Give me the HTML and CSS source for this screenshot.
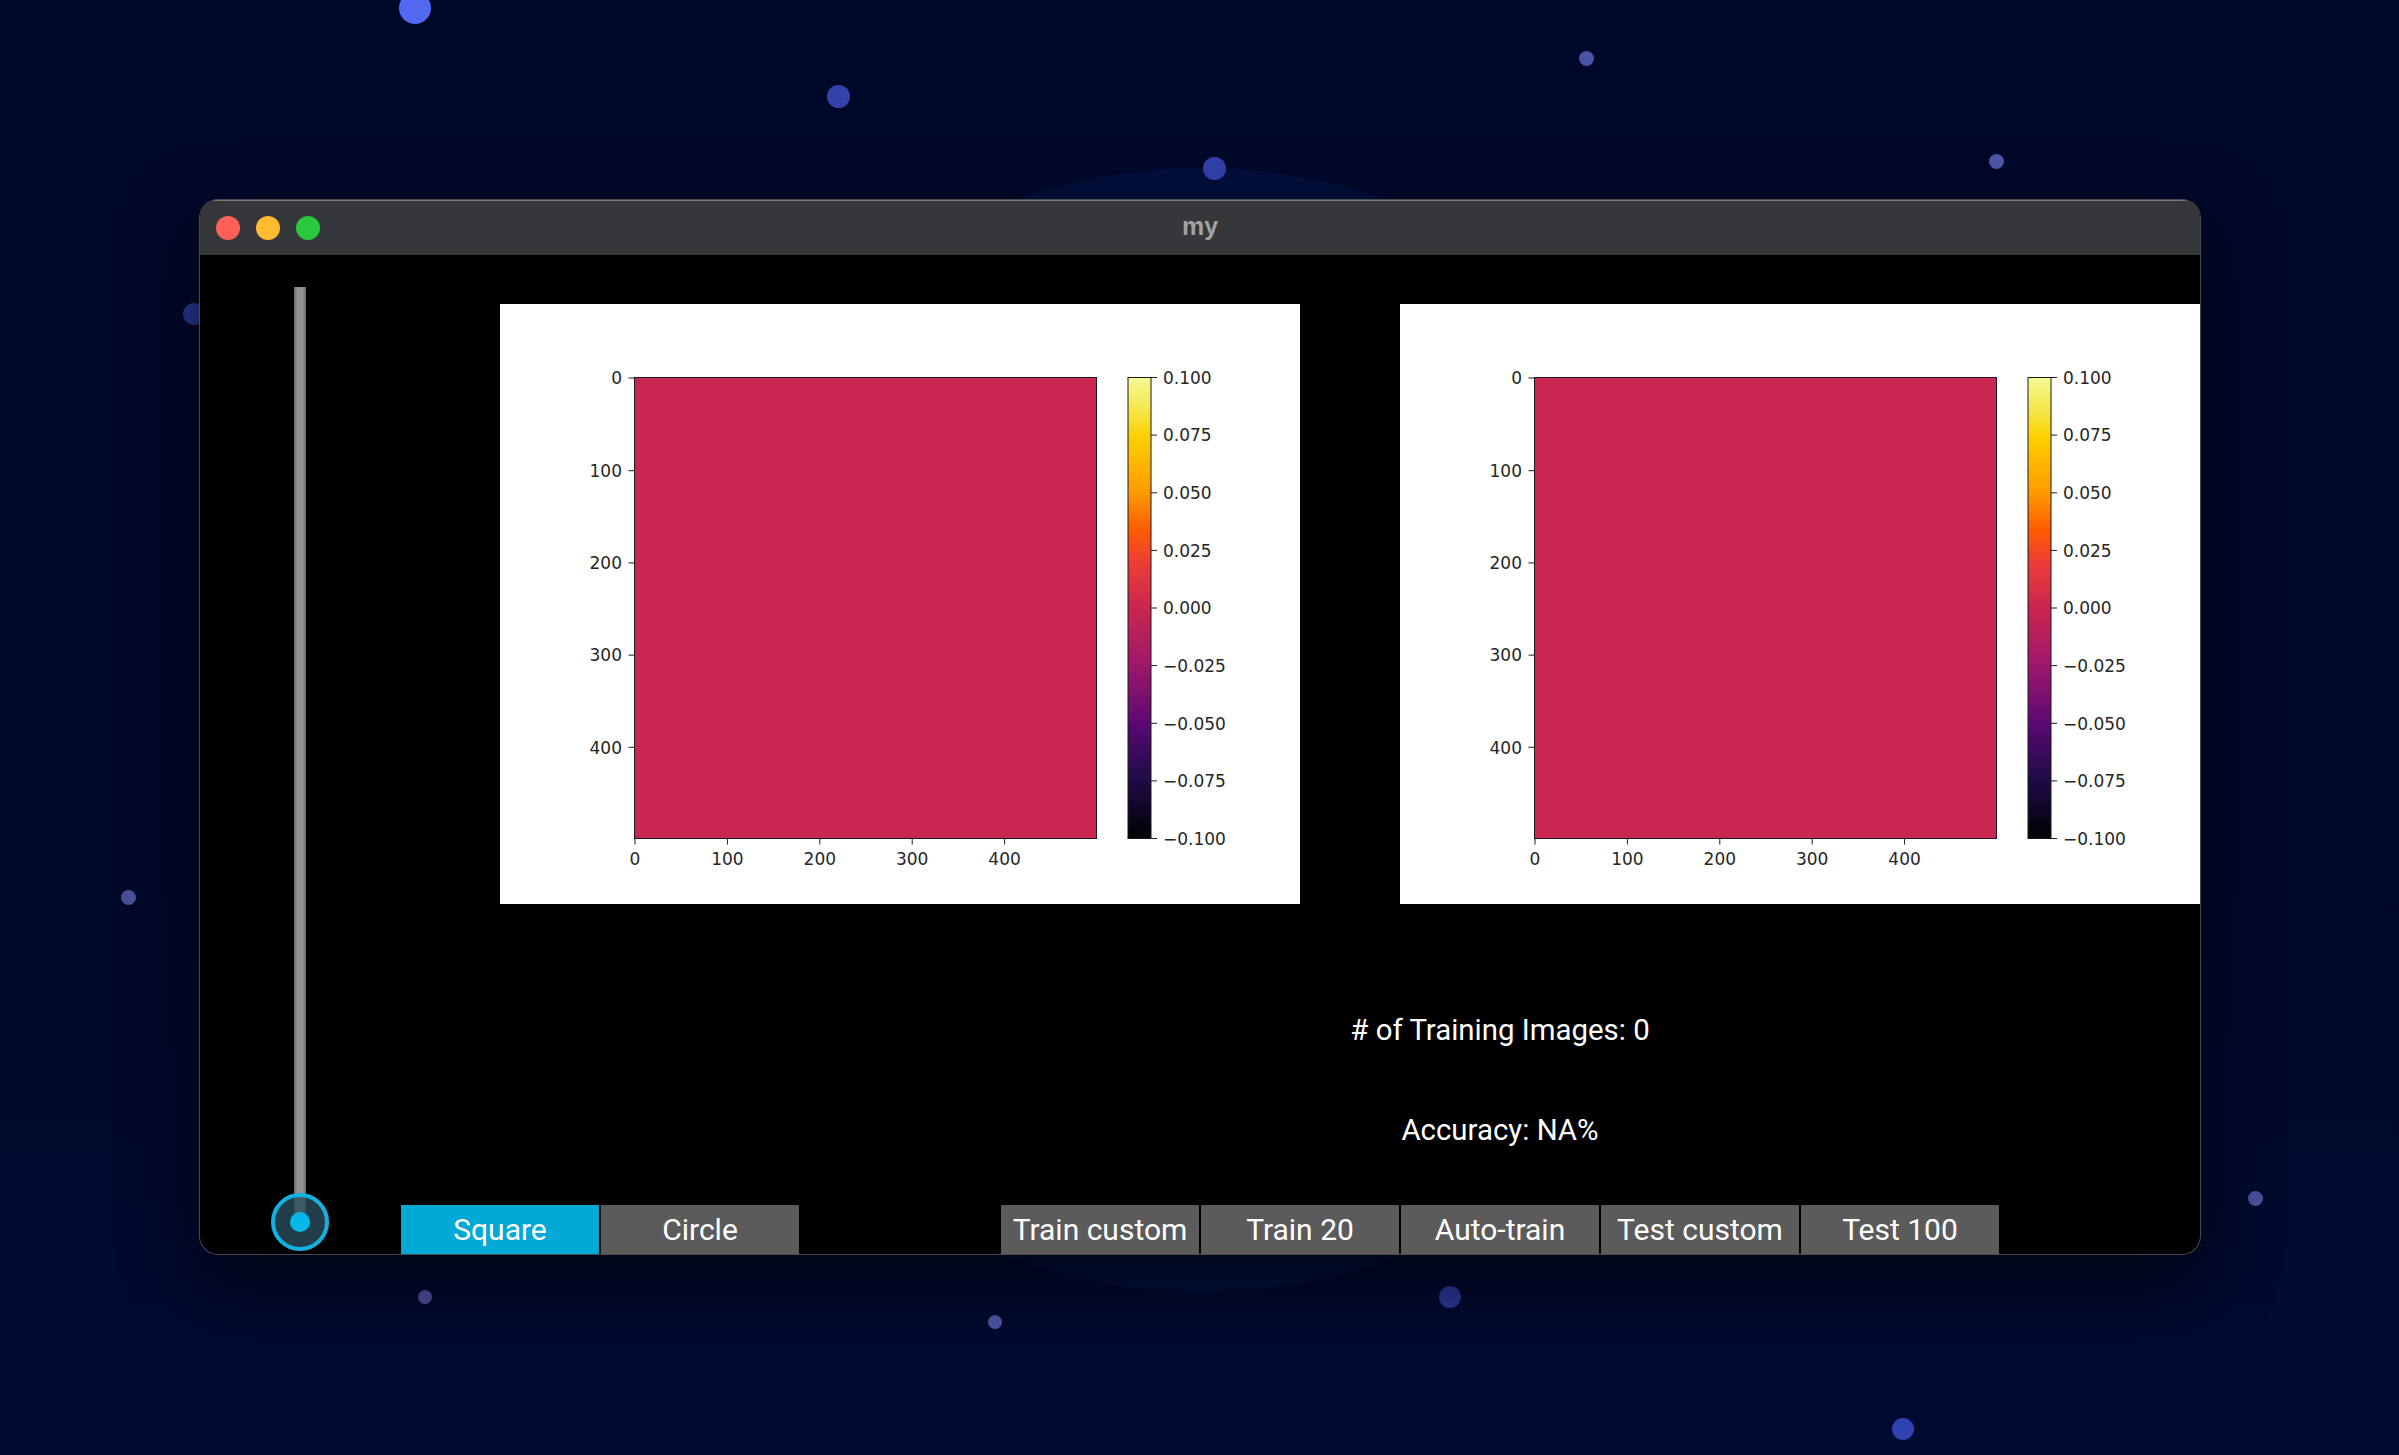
FILE: index.html
```html
<!DOCTYPE html>
<html lang="en">
<head>
<meta charset="utf-8">
<title>my</title>
<link rel="stylesheet" href="styles.css">
</head>
<body>
<div class="desktop">
  <div class="glow"></div>
  <span class="dot d1"></span>
  <span class="dot d2"></span>
  <span class="dot d3"></span>
  <span class="dot d4"></span>
  <span class="dot d5"></span>
  <span class="dot d6"></span>
  <span class="dot d7"></span>
  <span class="dot d8"></span>
  <span class="dot d9"></span>
  <span class="dot d10"></span>
  <span class="dot d11"></span>
  <span class="dot d12"></span>

  <div class="window">
    <div class="titlebar">
      <div class="lights">
        <span class="light red"></span>
        <span class="light yellow"></span>
        <span class="light green"></span>
      </div>
      <div class="title">my</div>
      <div></div>
    </div>
    <div class="content">
      <div class="slider">
        <div class="track"></div>
        <div class="knob"><span class="knob-dot"></span></div>
      </div>
      <div class="main">
        <div class="plots">
          <svg class="figure" viewBox="0 0 800 600" width="800" height="600">
            <defs>
              <linearGradient id="cmapA" x1="0" y1="0" x2="0" y2="1">
                <stop offset="0" stop-color="#f5fa96"/>
                <stop offset="0.07" stop-color="#f6e74c"/>
                <stop offset="0.13" stop-color="#fdd000"/>
                <stop offset="0.25" stop-color="#ff9a00"/>
                <stop offset="0.33" stop-color="#ff5c00"/>
                <stop offset="0.4" stop-color="#ec3e36"/>
                <stop offset="0.5" stop-color="#c9264f"/>
                <stop offset="0.62" stop-color="#a0186b"/>
                <stop offset="0.75" stop-color="#5b0973"/>
                <stop offset="0.87" stop-color="#200b48"/>
                <stop offset="1" stop-color="#000003"/>
              </linearGradient>
            </defs>
            <rect class="fig-bg" width="800" height="600"/>
            <rect class="image" x="134.5" y="73.5" width="462" height="461"/>
            <g class="tick">
              <line x1="128.5" y1="74" x2="134.5" y2="74"/>
              <line x1="128.5" y1="166.7" x2="134.5" y2="166.7"/>
              <line x1="128.5" y1="258.9" x2="134.5" y2="258.9"/>
              <line x1="128.5" y1="351.1" x2="134.5" y2="351.1"/>
              <line x1="128.5" y1="443.3" x2="134.5" y2="443.3"/>
              <line x1="135" y1="534.5" x2="135" y2="540.5"/>
              <line x1="227.4" y1="534.5" x2="227.4" y2="540.5"/>
              <line x1="319.8" y1="534.5" x2="319.8" y2="540.5"/>
              <line x1="412.2" y1="534.5" x2="412.2" y2="540.5"/>
              <line x1="504.6" y1="534.5" x2="504.6" y2="540.5"/>
              <line x1="651" y1="73.5" x2="657" y2="73.5"/>
              <line x1="651" y1="131.1" x2="657" y2="131.1"/>
              <line x1="651" y1="188.8" x2="657" y2="188.8"/>
              <line x1="651" y1="246.4" x2="657" y2="246.4"/>
              <line x1="651" y1="304" x2="657" y2="304"/>
              <line x1="651" y1="361.6" x2="657" y2="361.6"/>
              <line x1="651" y1="419.3" x2="657" y2="419.3"/>
              <line x1="651" y1="476.9" x2="657" y2="476.9"/>
              <line x1="651" y1="534.5" x2="657" y2="534.5"/>
            </g>
            <g class="tick-label end">
              <text x="122" y="80.2">0</text>
              <text x="122" y="172.9">100</text>
              <text x="122" y="265.1">200</text>
              <text x="122" y="357.3">300</text>
              <text x="122" y="449.5">400</text>
            </g>
            <g class="tick-label middle">
              <text x="135" y="560.5">0</text>
              <text x="227.4" y="560.5">100</text>
              <text x="319.8" y="560.5">200</text>
              <text x="412.2" y="560.5">300</text>
              <text x="504.6" y="560.5">400</text>
            </g>
            <rect class="cbar" x="628" y="73.5" width="23" height="461" fill="url(#cmapA)"/>
            <g class="tick-label start">
              <text x="663" y="79.7">0.100</text>
              <text x="663" y="137.3">0.075</text>
              <text x="663" y="195">0.050</text>
              <text x="663" y="252.6">0.025</text>
              <text x="663" y="310.2">0.000</text>
              <text x="663" y="367.8">−0.025</text>
              <text x="663" y="425.5">−0.050</text>
              <text x="663" y="483.1">−0.075</text>
              <text x="663" y="540.7">−0.100</text>
            </g>
          </svg>
          <svg class="figure" viewBox="0 0 800 600" width="800" height="600">
            <defs>
              <linearGradient id="cmapB" x1="0" y1="0" x2="0" y2="1">
                <stop offset="0" stop-color="#f5fa96"/>
                <stop offset="0.07" stop-color="#f6e74c"/>
                <stop offset="0.13" stop-color="#fdd000"/>
                <stop offset="0.25" stop-color="#ff9a00"/>
                <stop offset="0.33" stop-color="#ff5c00"/>
                <stop offset="0.4" stop-color="#ec3e36"/>
                <stop offset="0.5" stop-color="#c9264f"/>
                <stop offset="0.62" stop-color="#a0186b"/>
                <stop offset="0.75" stop-color="#5b0973"/>
                <stop offset="0.87" stop-color="#200b48"/>
                <stop offset="1" stop-color="#000003"/>
              </linearGradient>
            </defs>
            <rect class="fig-bg" width="800" height="600"/>
            <rect class="image" x="134.5" y="73.5" width="462" height="461"/>
            <g class="tick">
              <line x1="128.5" y1="74" x2="134.5" y2="74"/>
              <line x1="128.5" y1="166.7" x2="134.5" y2="166.7"/>
              <line x1="128.5" y1="258.9" x2="134.5" y2="258.9"/>
              <line x1="128.5" y1="351.1" x2="134.5" y2="351.1"/>
              <line x1="128.5" y1="443.3" x2="134.5" y2="443.3"/>
              <line x1="135" y1="534.5" x2="135" y2="540.5"/>
              <line x1="227.4" y1="534.5" x2="227.4" y2="540.5"/>
              <line x1="319.8" y1="534.5" x2="319.8" y2="540.5"/>
              <line x1="412.2" y1="534.5" x2="412.2" y2="540.5"/>
              <line x1="504.6" y1="534.5" x2="504.6" y2="540.5"/>
              <line x1="651" y1="73.5" x2="657" y2="73.5"/>
              <line x1="651" y1="131.1" x2="657" y2="131.1"/>
              <line x1="651" y1="188.8" x2="657" y2="188.8"/>
              <line x1="651" y1="246.4" x2="657" y2="246.4"/>
              <line x1="651" y1="304" x2="657" y2="304"/>
              <line x1="651" y1="361.6" x2="657" y2="361.6"/>
              <line x1="651" y1="419.3" x2="657" y2="419.3"/>
              <line x1="651" y1="476.9" x2="657" y2="476.9"/>
              <line x1="651" y1="534.5" x2="657" y2="534.5"/>
            </g>
            <g class="tick-label end">
              <text x="122" y="80.2">0</text>
              <text x="122" y="172.9">100</text>
              <text x="122" y="265.1">200</text>
              <text x="122" y="357.3">300</text>
              <text x="122" y="449.5">400</text>
            </g>
            <g class="tick-label middle">
              <text x="135" y="560.5">0</text>
              <text x="227.4" y="560.5">100</text>
              <text x="319.8" y="560.5">200</text>
              <text x="412.2" y="560.5">300</text>
              <text x="504.6" y="560.5">400</text>
            </g>
            <rect class="cbar" x="628" y="73.5" width="23" height="461" fill="url(#cmapB)"/>
            <g class="tick-label start">
              <text x="663" y="79.7">0.100</text>
              <text x="663" y="137.3">0.075</text>
              <text x="663" y="195">0.050</text>
              <text x="663" y="252.6">0.025</text>
              <text x="663" y="310.2">0.000</text>
              <text x="663" y="367.8">−0.025</text>
              <text x="663" y="425.5">−0.050</text>
              <text x="663" y="483.1">−0.075</text>
              <text x="663" y="540.7">−0.100</text>
            </g>
          </svg>
        </div>
        <div class="stats">
          <div class="stat"># of Training Images: 0</div>
          <div class="stat">Accuracy: NA%</div>
        </div>
        <div class="buttons">
          <button class="btn active">Square</button>
          <button class="btn">Circle</button>
          <span class="cell-empty"></span>
          <button class="btn">Train custom</button>
          <button class="btn">Train 20</button>
          <button class="btn">Auto-train</button>
          <button class="btn">Test custom</button>
          <button class="btn">Test 100</button>
          <span class="cell-empty"></span>
        </div>
      </div>
    </div>
  </div>
</div>
</body>
</html>
```

FILE: styles.css
```css
html, body {
  margin: 0;
  padding: 0;
}

body {
  width: 2399px;
  height: 1455px;
  overflow: hidden;
  background: #00082a;
  font-family: Roboto, "Liberation Sans", sans-serif;
}

.desktop {
  position: relative;
  width: 2399px;
  height: 1455px;
  overflow: hidden;
  background:
    linear-gradient(180deg, #00082a 0%, #00082a 60%, #010a30 100%);
}

.glow {
  position: absolute;
  left: 640px;
  top: 168px;
  width: 1124px;
  height: 1124px;
  border-radius: 50%;
  background: #010f3a;
}

.dot {
  position: absolute;
  border-radius: 50%;
  background: #3443a8;
}

.d1 { left: 399px; top: -8px; width: 32px; height: 32px; background: #5169f2; }
.d2 { left: 827px; top: 85px; width: 23px; height: 23px; background: #3443ac; }
.d3 { left: 1579px; top: 51px; width: 15px; height: 15px; background: #4a54a6; }
.d4 { left: 1203px; top: 157px; width: 23px; height: 23px; background: #3141aa; }
.d5 { left: 1989px; top: 154px; width: 15px; height: 15px; background: #4e57a6; }
.d6 { left: 183px; top: 303px; width: 22px; height: 22px; background: #2a3690; }
.d7 { left: 121px; top: 890px; width: 15px; height: 15px; background: #4a5098; }
.d8 { left: 2248px; top: 1191px; width: 15px; height: 15px; background: #4a5098; }
.d9 { left: 418px; top: 1290px; width: 14px; height: 14px; background: #4a5098; }
.d10 { left: 988px; top: 1315px; width: 14px; height: 14px; background: #4c56a2; }
.d11 { left: 1439px; top: 1286px; width: 22px; height: 22px; background: #2a3692; }
.d12 { left: 1892px; top: 1418px; width: 22px; height: 22px; background: #3242b2; }

/* Window */
.window {
  position: absolute;
  left: 200px;
  top: 200px;
  width: 2000px;
  height: 1054px;
  border-radius: 18px;
  overflow: hidden;
  background: #000;
  box-shadow: 0 0 0 1px #4a4a4c, 0 26px 70px rgba(0, 0, 0, 0.6);
  display: flex;
  flex-direction: column;
}

.titlebar {
  flex: none;
  height: 55px;
  background: #36373a;
  box-shadow: inset 0 1px 0 #7a7a7c;
  display: grid;
  grid-template-columns: 1fr auto 1fr;
  align-items: center;
}

.lights {
  display: flex;
  gap: 16px;
  padding-left: 16px;
  padding-top: 1px;
}

.light {
  width: 24px;
  height: 24px;
  border-radius: 50%;
}

.red { background: #fe5f57; }
.yellow { background: #febc2e; }
.green { background: #28c840; }

.title {
  font-family: "Liberation Sans", Arial, sans-serif;
  font-weight: bold;
  font-size: 25px;
  color: #a2a2a4;
  padding-bottom: 2px;
}

.content {
  flex: 1;
  display: grid;
  grid-template-columns: 200px 1800px;
  min-height: 0;
}

/* Slider */
.slider {
  position: relative;
  display: flex;
  justify-content: center;
  padding: 32px 0;
}

.track {
  width: 12px;
  background: linear-gradient(90deg, #6c6c6c 0%, #939393 30%, #939393 70%, #6c6c6c 100%);
}

.knob {
  position: absolute;
  left: 71px;
  top: 938px;
  width: 58px;
  height: 58px;
  box-sizing: border-box;
  border: 4px solid #13b2e0;
  border-radius: 50%;
  background: rgba(44, 78, 94, 0.8);
  display: flex;
  align-items: center;
  justify-content: center;
}

.knob-dot {
  width: 20px;
  height: 20px;
  border-radius: 50%;
  background: #07b7e8;
}

/* Main area */
.main {
  display: flex;
  flex-direction: column;
  min-width: 0;
}

.plots {
  height: 725px;
  box-sizing: border-box;
  padding: 49px 0 0 100px;
  display: flex;
  gap: 100px;
}

.figure {
  display: block;
  flex: none;
  width: 800px;
  height: 600px;
}

.fig-bg { fill: #ffffff; }

.image {
  fill: #ca2651;
  stroke: #1a1a1a;
  stroke-width: 1;
}

.cbar {
  stroke: #1a1a1a;
  stroke-width: 1;
}

.tick line {
  stroke: #1a1a1a;
  stroke-width: 1;
}

.tick-label {
  font-family: "DejaVu Sans", sans-serif;
  font-size: 17px;
  fill: #262626;
}

.tick-label.end { text-anchor: end; }
.tick-label.middle { text-anchor: middle; }
.tick-label.start { text-anchor: start; }

.stats {
  padding-left: 400px;
}

.stat {
  height: 100px;
  line-height: 100px;
  text-align: center;
  color: #ffffff;
  font-size: 29.4px;
}

.buttons {
  margin-top: 25px;
  height: 50px;
  display: grid;
  grid-template-columns: repeat(9, 200px);
}

.btn {
  margin: 0 1px 1px;
  border: none;
  padding: 0;
  background: #5b5b5b;
  color: #ffffff;
  font-family: Roboto, "Liberation Sans", sans-serif;
  font-size: 30px;
  display: flex;
  align-items: center;
  justify-content: center;
}

.btn.active {
  background: #02a9d6;
}
```
